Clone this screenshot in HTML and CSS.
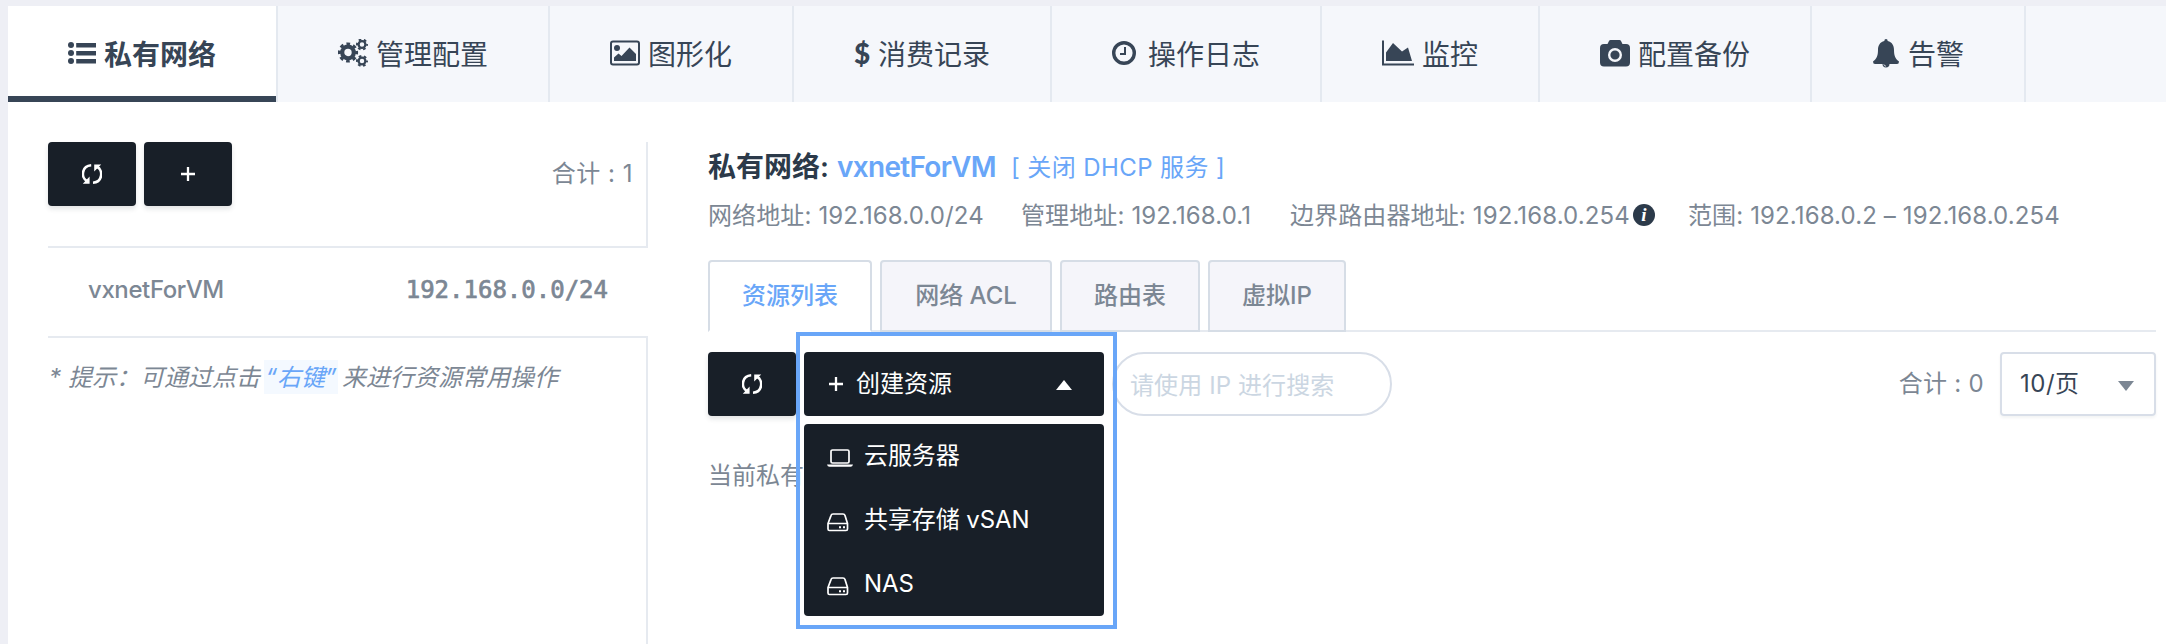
FILE: index.html
```html
<!DOCTYPE html>
<html lang="zh-CN">
<head>
<meta charset="utf-8">
<title>私有网络</title>
<link rel="stylesheet" href="styles.css">
</head>
<body>
<svg class="defs" width="0" height="0">
  <symbol id="refresh" viewBox="0 0 20 20">
    <path d="M9.200 1.300C-.8 2-1 14 4.800 17M11 18.700C21 18 21 6 15.400 3" fill="none" stroke="#fff" stroke-width="2.600"/>
    <path d="M.8 19.800H7.600V12.500zM19.200.5H12.200V7.500z" fill="#fff"/>
  </symbol>
  <symbol id="plus" viewBox="0 0 14 14"><path d="M7 0V14M0 7H14" stroke="#fff" stroke-width="2.300"/></symbol>
  <symbol id="drive" viewBox="0 0 22 19">
    <path d="M1 10.500 4 2.600Q4.500 1 6 1H16Q17.500 1 18 2.600L20.500 10.500V16Q20.500 17.500 19 17.500H2.500Q1 17.500 1 16ZM1 10.500H20.500" fill="none" stroke="#fff" stroke-width="1.700"/>
    <path d="M12 13.200h2v2h-2zM16 13.200h2v2h-2z" fill="#fff"/>
  </symbol>
</svg>
<div class="page">
  <nav class="nav">
    <a class="tab active"><svg width="28" height="22" viewBox="0 0 28 22"><g fill="currentColor"><circle cx="3" cy="3" r="3"/><circle cx="3" cy="11" r="3"/><circle cx="3" cy="19" r="3"/><path d="M8.200 1H28v4.400H8.200zM8.200 9H28v4.400H8.200zM8.200 17H28v4.400H8.200z"/></g></svg><span>私有网络</span></a>
    <a class="tab"><svg width="30" height="28" viewBox="0 0 30 28"><g fill="none" stroke="currentColor"><circle cx="10" cy="13.500" r="5.800" stroke-width="4.200"/><circle cx="10" cy="13.500" r="8.600" stroke-width="3" stroke-dasharray="3.600 3.154" stroke-dashoffset="1.800"/><circle cx="24" cy="5.500" r="3.400" stroke-width="2.300"/><circle cx="24" cy="5.500" r="5" stroke-width="2" stroke-dasharray="2.600 2.636" stroke-dashoffset="1.300"/><circle cx="24" cy="22" r="3.400" stroke-width="2.300"/><circle cx="24" cy="22" r="5" stroke-width="2" stroke-dasharray="2.600 2.636" stroke-dashoffset="1.300"/></g></svg><span>管理配置</span></a>
    <a class="tab"><svg width="30" height="26" viewBox="0 0 30 26"><rect x="1" y="1.500" width="28" height="23" rx="2" fill="none" stroke="currentColor" stroke-width="2"/><circle cx="7" cy="8" r="3" fill="currentColor"/><path d="M4 21V17.500L8.500 13.500 11.500 16 19.500 7.500 26 14V21z" fill="currentColor"/></svg><span>图形化</span></a>
    <a class="tab"><b class="dollar">$</b><span>消费记录</span></a>
    <a class="tab clock"><svg width="24" height="24" viewBox="0 0 24 24"><circle cx="12" cy="12" r="10.300" fill="none" stroke="currentColor" stroke-width="3.400"/><path d="M13 6V13H8" fill="none" stroke="currentColor" stroke-width="2"/></svg><span>操作日志</span></a>
    <a class="tab"><svg width="32" height="26" viewBox="0 0 32 26"><path d="M1 .5V24.500H32" fill="none" stroke="currentColor" stroke-width="2"/><path d="M4 21V12.500L11 3 20 11.500 26 7.500 30 21z" fill="currentColor"/></svg><span>监控</span></a>
    <a class="tab"><svg width="30" height="28" viewBox="0 0 30 28"><path d="M4 5H7.500L9 2Q9.500 1 10.500 1H19.500Q20.500 1 21 2L22.500 5H26Q30 5 30 9V23.500Q30 27.500 26 27.500H4Q0 27.500 0 23.500V9Q0 5 4 5Z" fill="currentColor"/><circle cx="15" cy="16" r="5.800" fill="none" stroke="#f5f7fb" stroke-width="2.400"/></svg><span>配置备份</span></a>
    <a class="tab"><svg width="28" height="30" viewBox="0 0 28 30"><path d="M14 1Q15.700 1 15.700 3C20 4 22 7.500 22 12C22 18 23.500 21 27 23.500Q27 26 25 26H17.500A3.500 3.500 0 0 1 10.500 26H3Q1 26 1 23.500C4.500 21 6 18 6 12C6 7.500 8 4 12.300 3Q12.300 1 14 1Z" fill="currentColor"/><path d="M11.800 26.300Q12 28 14 28.200" fill="none" stroke="#f5f7fb" stroke-width=".8"/></svg><span>告警</span></a>
  </nav>
  <div class="body">
    <aside class="side">
      <div class="side-head">
        <button class="btn"><svg width="20" height="20"><use href="#refresh"/></svg></button>
        <button class="btn"><svg width="14" height="14"><use href="#plus"/></svg></button>
        <span class="total">合计 : 1</span>
      </div>
      <div class="net"><span class="net-name">vxnetForVM</span><span class="net-ip">192.168.0.0/24</span></div>
      <div class="hint"><span class="star">*</span><span>提示：可通过点击</span><span class="chip">“右键”</span><span>来进行资源常用操作</span></div>
    </aside>
    <main class="main">
      <h1 class="title"><span class="t-label">私有网络:</span><span class="t-name">vxnetForVM</span><a class="t-link">[ 关闭 DHCP 服务 ]</a></h1>
      <div class="meta">
        <span class="m1">网络地址: 192.168.0.0/24</span><span class="m2">管理地址: 192.168.0.1</span><span class="m3">边界路由器地址: 192.168.0.254</span><i class="info">i</i><span class="m4">范围: 192.168.0.2 – 192.168.0.254</span>
      </div>
      <div class="subtabs">
        <a class="sub s1 on">资源列表</a><a class="sub s2">网络 ACL</a><a class="sub s3">路由表</a><a class="sub s4">虚拟IP</a>
      </div>
      <div class="tools">
        <button class="btn"><svg width="20" height="20"><use href="#refresh"/></svg></button>
        <div class="create">
          <div class="frame">
            <div class="create-btn"><svg width="14" height="14"><use href="#plus"/></svg><span>创建资源</span><i class="up"></i></div>
            <div class="menu">
              <div class="item"><svg width="26" height="20" viewBox="0 0 26 20"><rect x="4" y="2" width="18" height="13" rx="1.500" fill="none" stroke="#fff" stroke-width="1.700"/><path d="M0 16.500H26Q25.500 18.800 23.500 18.800H2.500Q.5 18.800 0 16.500Z" fill="#fff"/></svg><span>云服务器</span></div>
              <div class="item"><svg class="drive" width="22" height="19"><use href="#drive"/></svg><span>共享存储 vSAN</span></div>
              <div class="item"><svg class="drive" width="22" height="19"><use href="#drive"/></svg><span>NAS</span></div>
            </div>
          </div>
        </div>
        <div class="search">请使用 IP 进行搜索</div>
        <span class="count">合计 : 0</span>
        <div class="select"><span>10/页</span><i class="down"></i></div>
      </div>
      <p class="empty">当前私有网络</p>
    </main>
  </div>
</div>
</body>
</html>
```
FILE: styles.css
```css
* { box-sizing: border-box; }
body { margin: 0; background: #eeeff5; font: 24px/36px Inter, "Noto Sans CJK SC", sans-serif; color: #7c8794; }
.defs { position: absolute; }
.page { height: 644px; padding: 6px 0 0 8px; overflow: hidden; display: flex; flex-direction: column; white-space: nowrap; }
svg { display: block; flex: none; }
.nav { display: flex; height: 96px; background: #f5f7fb; flex: none; }
.tab { display: flex; align-items: center; gap: 8px; padding: 0 60px; border-right: 2px solid #e4e9f0; font-size: 28px; color: #374556; }
.tab span { padding-top: 1px; }
.tab.active { background: #fff; font-weight: 600; box-shadow: inset 0 -6px #374556; }
.tab.clock { gap: 12px; }
.tab svg { margin-top: -3px; }
.dollar { width: 16px; font: 900 28px/36px Lato, sans-serif; text-align: center; margin-top: -3px; }
.body { flex: 1; display: flex; background: #fff; min-height: 0; }
.side { width: 640px; padding: 40px 0 0 40px; display: flex; flex-direction: column; flex: none; }
.side-head { height: 106px; display: flex; gap: 8px; border-right: 2px solid #e6eaf0; border-bottom: 2px solid #e6eaf0; padding-right: 13px; }
.btn { width: 88px; height: 64px; border: 0; border-radius: 4px; background: #181f28; padding: 0; display: flex; align-items: center; justify-content: center; box-shadow: 0 3px 5px rgba(24,31,40,.12); flex: none; }
.total { margin-left: auto; line-height: 64px; letter-spacing: .5px; }
.net { height: 88px; padding: 0 40px 4px; display: flex; justify-content: space-between; align-items: center; }
.net-name { font-weight: 500; letter-spacing: -.4px; }
.net-ip { font: 24px/36px "DejaVu Sans Mono", monospace; -webkit-text-stroke: .7px #7c8794; }
.hint { flex: 1; border-top: 2px solid #e6eaf0; border-right: 2px solid #e6eaf0; padding-top: 22px; display: flex; align-items: flex-start; font-style: italic; line-height: 36px; }
.star { width: 20px; padding-left: 1px; }
.chip { width: 74px; margin: 0 4px; background: #f4f9ff; color: #69a6f8; height: 34px; display: flex; justify-content: center; }
.main { flex: 1; padding: 44px 10px 0 60px; }
.title { margin: 0; height: 42px; display: flex; align-items: center; font-size: 28px; line-height: 42px; font-weight: 600; color: #2c3a4a; }
.t-label { width: 129px; }
.t-name { width: 174px; color: #69a6f8; letter-spacing: -.7px; }
.t-link { font-size: 24px; font-weight: 400; color: #69a6f8; letter-spacing: .4px; padding-top: 2px; }
.meta { display: flex; margin-top: 10px; height: 36px; align-items: center; letter-spacing: .12px; }
.m1 { width: 313px; }
.m2 { width: 269px; }
.m3 { width: 343px; }
.m4 { margin-left: 33px; }
.info { width: 22px; height: 22px; border-radius: 50%; background: #2c3a4a; color: #fff; font: italic bold 19px/21px "Liberation Serif", serif; text-align: center; margin-top: -2px; }
.subtabs { display: flex; gap: 8px; margin-top: 26px; height: 72px; box-shadow: inset 0 -2px #e6eaf0; }
.sub { border: 2px solid #d6dde6; border-radius: 4px 4px 0 0; background: #f5f5fa; font-weight: 500; line-height: 68px; text-align: center; }
.on { background: #fff; color: #69a6f8; border-bottom-color: #fff; }
.s1 { width: 164px; }
.s2 { width: 172px; }
.s3 { width: 140px; }
.s4 { width: 138px; }
.tools { display: flex; margin-top: 20px; height: 64px; line-height: 60px; }
.create { width: 316px; position: relative; z-index: 2; }
.frame { position: absolute; left: 0; top: -20px; width: 321px; height: 297px; border: 4px solid #69a6f8; padding: 16px 9px 9px 4px; display: flex; flex-direction: column; gap: 8px; color: #fff; }
.create-btn { width: 300px; height: 64px; flex: none; background: #181f28; border-radius: 4px; display: flex; align-items: center; padding: 0 32px 0 25px; gap: 13px; }
.up { margin-left: auto; border: 8px solid transparent; border-top: 0; border-bottom: 10px solid #fff; margin-top: 2px; }
.menu { width: 300px; background: #181f28; border-radius: 4px; }
.item { height: 64px; display: flex; align-items: center; padding-left: 23px; line-height: 60px; letter-spacing: -.1px; }
.item svg { margin: 4px 11px 0 0; }
.item .drive { margin-right: 15px; }
.search { width: 280px; border: 2px solid #d8dee8; border-radius: 32px; padding-left: 16px; color: #cbd6e2; line-height: 64px; letter-spacing: .1px; }
.count { margin-left: auto; margin-right: 16px; line-height: 64px; letter-spacing: .3px; }
.select { width: 156px; border: 2px solid #d8dee8; border-radius: 4px; display: flex; align-items: center; justify-content: space-between; padding: 0 20px 0 18px; color: #374556; letter-spacing: .5px; box-shadow: 0 2px 3px rgba(24,31,40,.05); }
.down { border: 8px solid transparent; border-bottom: 0; border-top: 10px solid #7c8794; margin-top: 4px; }
.empty { margin: 42px 0 0; line-height: 36px; }
```
